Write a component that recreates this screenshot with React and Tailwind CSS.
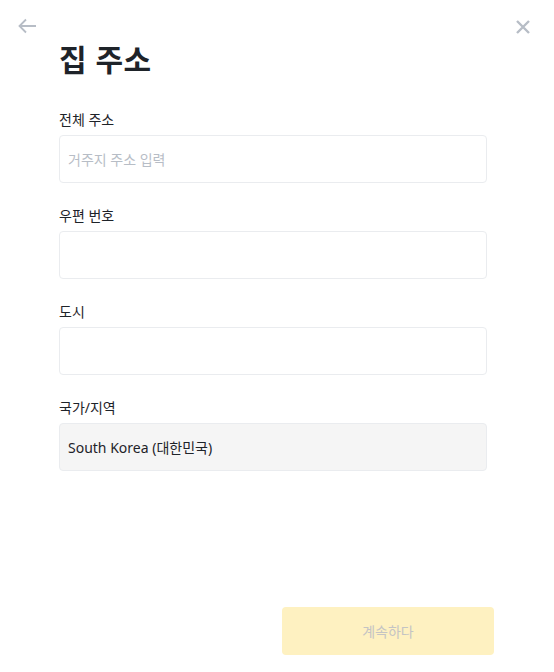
import React from 'react';

const fields = [
  { label: '전체 주소', placeholder: '거주지 주소 입력' },
  { label: '우편 번호', placeholder: '' },
  { label: '도시', placeholder: '' },
];

const App = () => {
  return (
    <div
      className="h-[672px] w-[554px] bg-white flex flex-col relative text-[#1e2329]"
      style={{ fontFamily: '"Noto Sans", "Noto Sans CJK KR", sans-serif' }}
    >
      {/* top icons */}
      <button className="absolute left-[17px] top-[17px] text-[#b7bdc6]">
        <svg width="20" height="18" viewBox="0 0 20 18" fill="none" stroke="currentColor" strokeWidth="1.8">
          <path d="M19 9H2.5M9 2.5L2.5 9L9 15.5" />
        </svg>
      </button>
      <button className="absolute left-[515px] top-[19px] text-[#b7bdc6]">
        <svg width="16" height="16" viewBox="0 0 16 16" fill="none" stroke="currentColor" strokeWidth="2.4">
          <path d="M2 2L14 14M14 2L2 14" />
        </svg>
      </button>

      <div className="pl-[59px] pr-[67px] pt-[40px]">
        <h1 className="text-[30px] leading-[40px] font-bold mb-[29px] tracking-[0.5px]">집 주소</h1>

        {fields.map((f) => (
          <div key={f.label} className="mb-[22px]">
            <div className="text-[14px] leading-[22px] mb-[4px]">{f.label}</div>
            <input
              className="w-full h-[48px] border border-[#eaecef] rounded-[4px] px-[8px] text-[14px] placeholder-[#b7bdc6] outline-none"
              placeholder={f.placeholder}
            />
          </div>
        ))}

        <div>
          <div className="text-[14px] leading-[22px] mb-[4px]">국가/지역</div>
          <div className="w-full h-[48px] border border-[#eaecef] rounded-[4px] px-[8px] bg-[#f5f5f5] flex items-center text-[14px]">
            South Korea (대한민국)
          </div>
        </div>
      </div>

      <div className="mt-auto flex justify-end pr-[60px] pb-[17px]">
        <button className="w-[212px] h-[48px] rounded-[4px] bg-[#fef1c1] text-[#c4c4c4] text-[14px]">
          계속하다
        </button>
      </div>
    </div>
  );
};

export default App;
